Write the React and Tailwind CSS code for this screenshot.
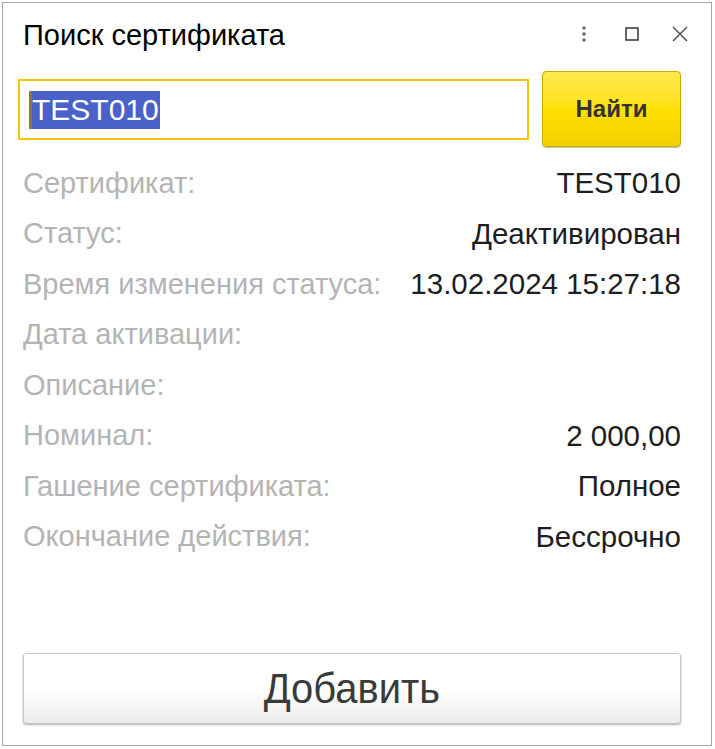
import React from 'react';

const font = { fontFamily: '"Liberation Sans", Arial, sans-serif' };

const rows = [
    ['Сертификат:', 'TEST010'],
    ['Статус:', 'Деактивирован'],
    ['Время изменения статуса:', '13.02.2024 15:27:18'],
    ['Дата активации:', ''],
    ['Описание:', ''],
    ['Номинал:', '2 000,00'],
    ['Гашение сертификата:', 'Полное'],
    ['Окончание действия:', 'Бессрочно'],
];

const App = () => {
    return (
        <div className="w-[715px] h-[749px] bg-white p-[2px]" style={font}>
            <div className="w-[710px] h-[744px] border border-[#a6a6a6] bg-white flex flex-col pl-[20px] pr-[30px]">
                {/* Header */}
                <div className="h-[68px] flex items-start justify-between shrink-0">
                    <div className="pt-[17px] text-[29px] leading-[30px] text-black">Поиск сертификата</div>
                    <div className="flex items-center pt-[21px] -mr-[9px]">
                        <svg width="20" height="20" viewBox="0 0 20 20" className="mr-[28px]">
                            <circle cx="10" cy="4" r="1.7" fill="#666" />
                            <circle cx="10" cy="10" r="1.7" fill="#666" />
                            <circle cx="10" cy="16" r="1.7" fill="#666" />
                        </svg>
                        <svg width="20" height="20" viewBox="0 0 20 20" className="mr-[28px]">
                            <rect x="4" y="4" width="12" height="12" fill="none" stroke="#333" strokeWidth="1.5" />
                        </svg>
                        <svg width="20" height="20" viewBox="0 0 20 20">
                            <path d="M3 3 L17 17 M17 3 L3 17" stroke="#555" strokeWidth="1.5" />
                        </svg>
                    </div>
                </div>

                {/* Search row */}
                <div className="flex items-start shrink-0">
                    <div className="-ml-[5px] mt-[8px] w-[511px] h-[61px] border-2 border-[#f7c600] flex items-center pl-[9px]">
                        <span className="bg-[#4a61c8] text-white text-[30px] leading-[38px] border-l-[3px] border-[#8a7a2a] pr-[1px]">
                            TEST010
                        </span>
                    </div>
                    <button className="ml-[13px] w-[139px] h-[76px] rounded-[4px] border border-[#c9a800] bg-gradient-to-b from-[#ffe94d] via-[#ffe100] to-[#f1d000] shadow-[0_1px_1px_rgba(0,0,0,0.25)] text-[24px] font-bold text-[#333]">
                        Найти
                    </button>
                </div>

                {/* Fields */}
                <div className="mt-[11px] flex flex-col">
                    {rows.map(([label, value]) => (
                        <div key={label} className="h-[50.5px] flex items-center justify-between whitespace-nowrap">
                            <span className="text-[29px] text-[#b4b4b4]">{label}</span>
                            <span className="text-[29.5px] text-[#1e1e1e]">{value}</span>
                        </div>
                    ))}
                </div>

                <div className="flex-1" />

                {/* Add button */}
                <button className="mb-[21px] w-full h-[71px] rounded-[3px] border border-[#c4c4c4] bg-gradient-to-b from-white from-50% to-[#ebebeb] shadow-[0_1px_2px_rgba(0,0,0,0.3)] text-[42px] text-[#3a3a3a] shrink-0">
                    <span className="inline-block scale-x-[0.95]">Добавить</span>
                </button>
            </div>
        </div>
    );
};

export default App;
